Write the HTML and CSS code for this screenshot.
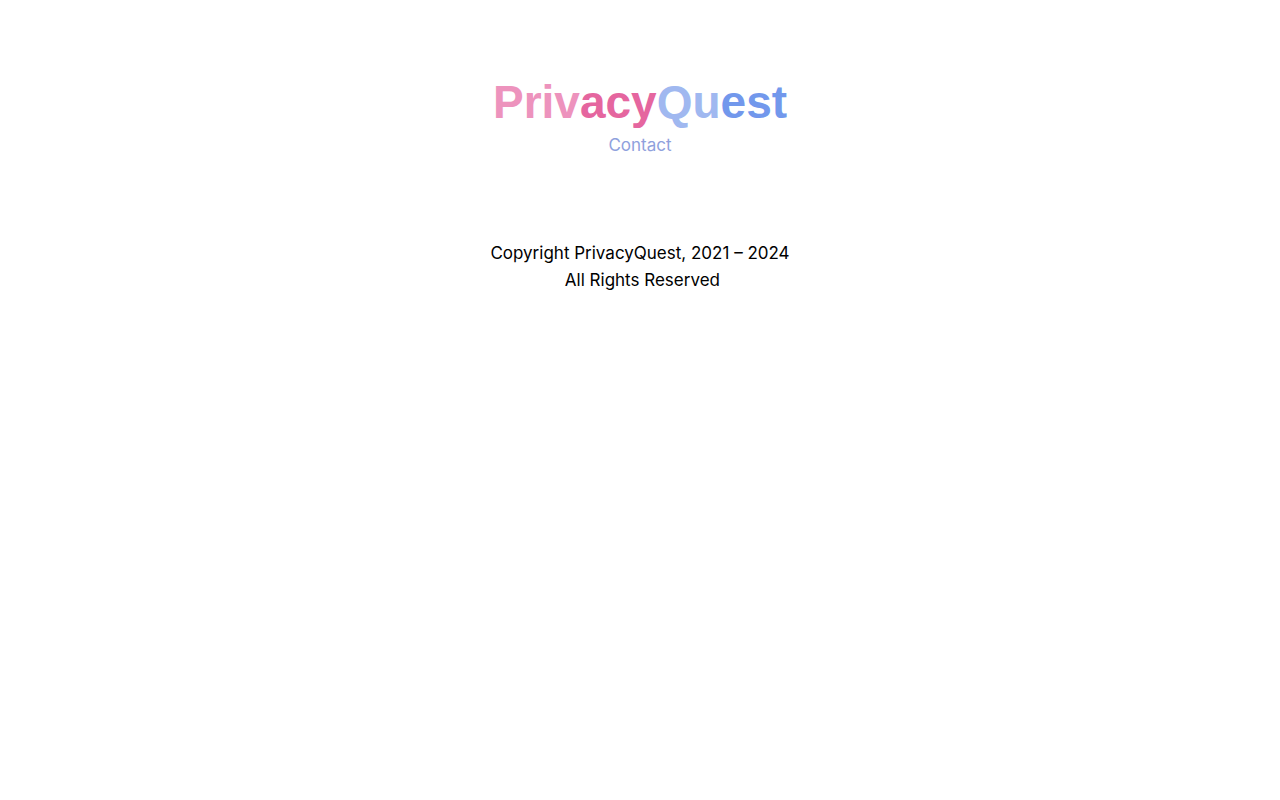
FILE: index.html
```html
<!DOCTYPE html>
<html lang="en">
<head>
<meta charset="utf-8">
<meta name="viewport" content="width=device-width, initial-scale=1">
<title>PrivacyQuest</title>
<link rel="stylesheet" href="styles.css">
</head>
<body>
<main class="page">
  <h1 class="logo"><span class="logo-pink-light">Priv</span><span class="logo-pink">acy</span><span class="logo-blue-light">Qu</span><span class="logo-blue">est</span></h1>
  <a class="contact" href="#contact">Contact</a>
</main>
<footer class="footer">
  <p class="line">Copyright PrivacyQuest, 2021 – 2024</p>
  <p class="line">&nbsp;All Rights Reserved</p>
</footer>
</body>
</html>
```
FILE: styles.css
```css
body {
  margin: 0;
  background: #fff;
  color: #000;
  font-family: Inter, sans-serif;
  font-size: 17px;
  line-height: 27px;
  text-align: center;
}

.page {
  display: flex;
  flex-direction: column;
  align-items: center;
  padding-top: 72px;
}

.logo {
  margin: 0;
  font-family: "Liberation Sans", Arial, sans-serif;
  font-size: 46px;
  font-weight: 700;
  line-height: 60px;
}

.logo-pink-light { color: #ed93bd; }
.logo-pink { color: #e5669f; }
.logo-blue-light { color: #a0b8f0; }
.logo-blue { color: #7298ec; }

.contact {
  color: #8fa1dd;
  text-decoration: none;
}

.footer {
  padding-top: 81px;
}

.line {
  margin: 0;
}
```
